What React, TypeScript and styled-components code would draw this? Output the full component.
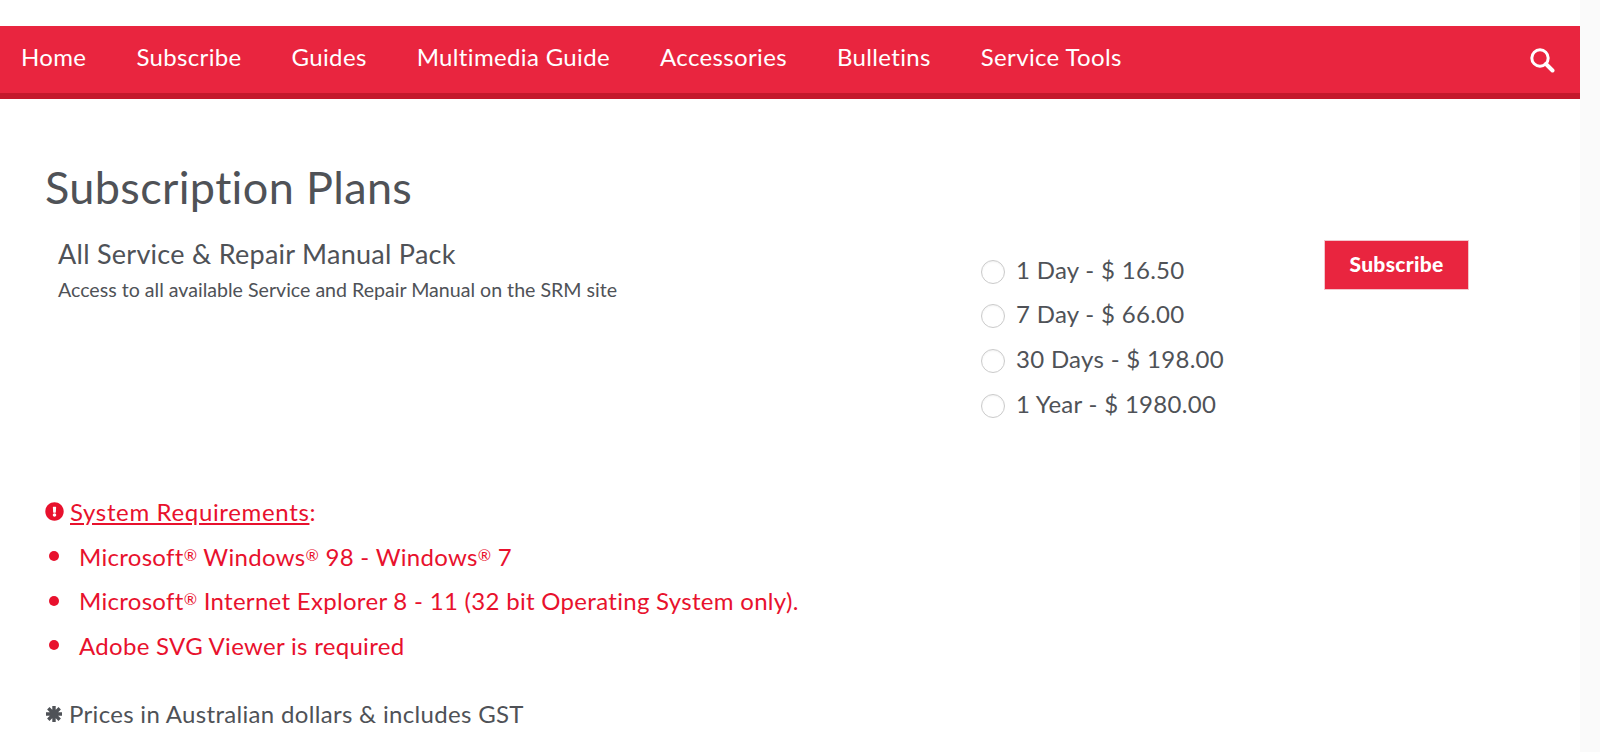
import React from "react";
import styled, { createGlobalStyle } from "styled-components";
import { FaExclamationCircle } from "react-icons/fa";

const GlobalStyle = createGlobalStyle`
  html, body {
    margin: 0;
    height: 100%;
    overflow: hidden;
    background: #fafafa;
    font-family: "Lato", "Noto Sans", sans-serif;
    font-variant-ligatures: none;
    color: #4f5257;
  }
`;

const navItems = [
  "Home",
  "Subscribe",
  "Guides",
  "Multimedia Guide",
  "Accessories",
  "Bulletins",
  "Service Tools",
];

const plans = [
  "1 Day - $ 16.50",
  "7 Day - $ 66.00",
  "30 Days - $ 198.00",
  "1 Year - $ 1980.00",
];

const App: React.FC = () => (
  <Page>
    <GlobalStyle />
    <NavBar>
      <NavList>
        {navItems.map((item) => (
          <NavLink key={item}>{item}</NavLink>
        ))}
      </NavList>
      <SearchButton>
        <svg width="26" height="26" viewBox="0 0 26 26" fill="none" stroke="#fff">
          <circle cx="11" cy="11" r="8.2" strokeWidth="3" />
          <path d="M17 17l6.5 6.5" strokeWidth="4" strokeLinecap="round" />
        </svg>
      </SearchButton>
    </NavBar>
    <Content>
      <Title>Subscription Plans</Title>
      <PlanRow>
        <PlanInfo>
          <PlanName>All Service &amp; Repair Manual Pack</PlanName>
          <PlanText>
            Access to all available Service and Repair Manual on the SRM site
          </PlanText>
        </PlanInfo>
        <Options>
          {plans.map((plan) => (
            <Option key={plan}>
              <Radio type="radio" name="plan" />
              {plan}
            </Option>
          ))}
        </Options>
        <SubscribeButton>Subscribe</SubscribeButton>
      </PlanRow>
      <Requirements>
        <RequirementsHead>
          <FaExclamationCircle size={19} />
          <span>
            <u>System Requirements</u>:
          </span>
        </RequirementsHead>
        <RequirementList>
          <li>
            <span>
              Microsoft<Reg>®</Reg> Windows<Reg>®</Reg> 98 - Windows<Reg>®</Reg> 7
            </span>
          </li>
          <li>
            <span>
              Microsoft<Reg>®</Reg> Internet Explorer 8 - 11 (32 bit Operating
              System only).
            </span>
          </li>
          <li>
            <span>Adobe SVG Viewer is required</span>
          </li>
        </RequirementList>
      </Requirements>
      <PriceNote>
        <svg width="18" height="18" viewBox="0 0 18 18" stroke="#4f5257" strokeWidth="3.4">
          <path d="M9 1v16M1 9h16M3.3 3.3l11.4 11.4M14.7 3.3L3.3 14.7" />
        </svg>
        Prices in Australian dollars &amp; includes GST
      </PriceNote>
    </Content>
  </Page>
);

export default App;

const Page = styled.div`
  width: 1580px;
  height: 752px;
  background: #fff;
  padding-top: 26px;
  box-sizing: border-box;
  overflow: hidden;
`;

const NavBar = styled.nav`
  height: 73px;
  box-sizing: border-box;
  background: #e9253f;
  border-bottom: 6px solid #c4182c;
  display: flex;
  align-items: center;
  justify-content: space-between;
  padding: 0 25px 5px 21px;
`;

const NavList = styled.div`
  display: flex;
  gap: 50px;
`;

const NavLink = styled.a`
  color: #fff;
  font-size: 24px;
  line-height: 32px;
  letter-spacing: 0.35px;
`;

const SearchButton = styled.span`
  display: flex;
  padding-top: 5px;
`;

const Content = styled.main`
  padding: 61px 0 0 45px;
`;

const Title = styled.h1`
  margin: 0 0 23px;
  font-size: 45px;
  line-height: 54px;
  font-weight: 400;
  letter-spacing: 0.35px;
`;

const PlanRow = styled.section`
  display: grid;
  grid-template-columns: 923px 343px 145px;
  padding-left: 13px;
  height: 251px;
`;

const PlanInfo = styled.div`
  padding-top: 1px;
`;

const PlanName = styled.h2`
  margin: 0;
  font-size: 27px;
  line-height: 32px;
  font-weight: 400;
  letter-spacing: 0.27px;
`;

const PlanText = styled.p`
  margin: 7px 0 0;
  font-size: 19.6px;
  line-height: 26px;
`;

const Options = styled.div`
  display: flex;
  flex-direction: column;
  padding-top: 10px;
`;

const Option = styled.label`
  display: flex;
  align-items: center;
  gap: 11px;
  height: 44.6px;
  font-size: 24px;
  letter-spacing: 0.3px;
`;

const Radio = styled.input`
  appearance: none;
  margin: 5px 0 0;
  width: 24px;
  height: 24px;
  border-radius: 50%;
  border: 1.5px solid #cbcbcb;
  box-shadow: inset 0 1px 2px rgba(0, 0, 0, 0.06);
  background: #fff;
  box-sizing: border-box;
`;

const SubscribeButton = styled.button`
  width: 145px;
  height: 50px;
  margin-top: 3px;
  background: #e9253f;
  color: #fff;
  border: 1px solid #f2c6cc;
  font-family: inherit;
  font-size: 21px;
  font-weight: 900;
  letter-spacing: 0.3px;
  padding: 0 0 4px;
`;

const Requirements = styled.section`
  color: #e8112d;
  font-size: 24px;
`;

const RequirementsHead = styled.div`
  display: flex;
  align-items: center;
  gap: 6px;
  height: 46px;
  letter-spacing: 0.65px;
`;

const RequirementList = styled.ul`
  margin: 0;
  padding: 0;
  list-style: none;
  letter-spacing: 0.3px;

  li {
    display: flex;
    align-items: center;
    height: 44.6px;
    padding-left: 4px;
    gap: 20px;
  }

  li::before {
    content: "";
    width: 10px;
    height: 10px;
    border-radius: 50%;
    background: currentColor;
  }
`;

const Reg = styled.span`
  font-size: 16px;
  vertical-align: 5px;
  line-height: 0;
`;

const PriceNote = styled.p`
  display: flex;
  align-items: center;
  gap: 6px;
  margin: 24px 0 0;
  font-size: 24px;
  line-height: 44px;
  letter-spacing: 0.32px;
`;
